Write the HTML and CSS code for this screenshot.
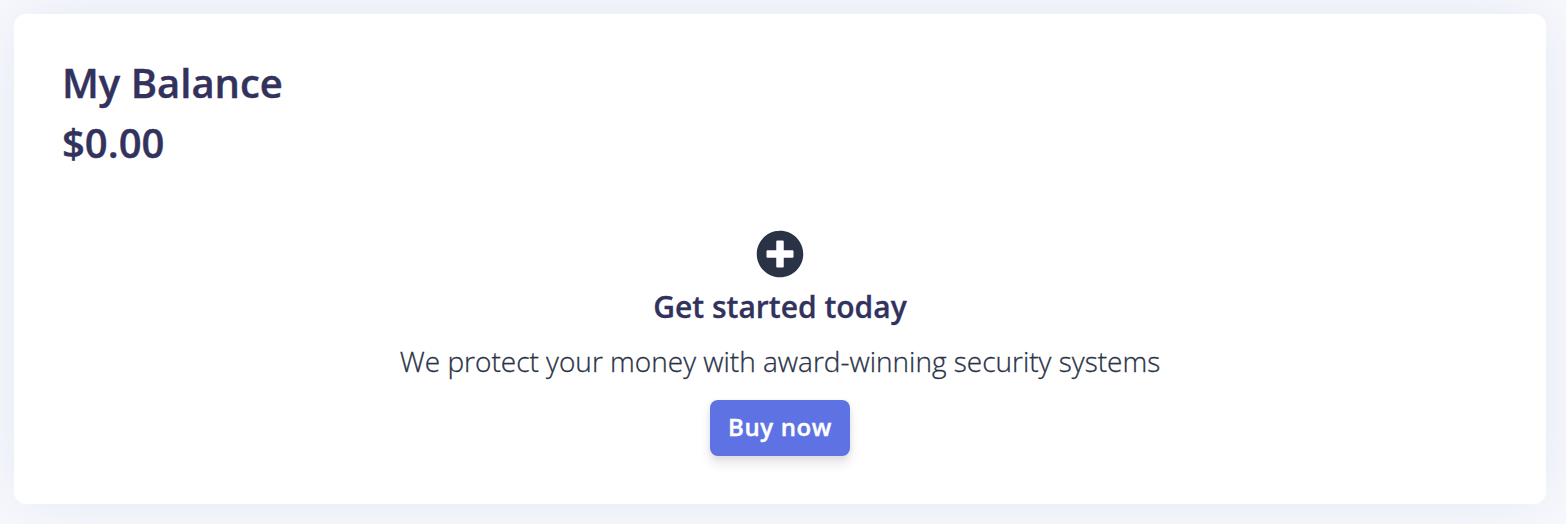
FILE: index.html
```html
<!DOCTYPE html>
<html lang="en">
<head>
<meta charset="utf-8">
<title>My Balance</title>
<link rel="stylesheet" href="styles.css">
</head>
<body>
<section class="card">
  <header class="balance">
    <h2 class="balance-title">My Balance</h2>
    <p class="balance-amount">$0.00</p>
  </header>
  <div class="starter">
    <svg class="plus-icon" viewBox="0 0 512 512" aria-hidden="true"><path fill="currentColor" d="M256 8C119 8 8 119 8 256s111 248 248 248 248-111 248-248S393 8 256 8zm144 276c0 6.600-5.400 12-12 12h-92v92c0 6.600-5.400 12-12 12h-56c-6.600 0-12-5.400-12-12v-92h-92c-6.600 0-12-5.400-12-12v-56c0-6.600 5.400-12 12-12h92v-92c0-6.600 5.400-12 12-12h56c6.600 0 12 5.400 12 12v92h92c6.600 0 12 5.400 12 12v56z"/></svg>
    <h3 class="starter-title">Get started today</h3>
    <p class="starter-text">We protect your money with award-winning security systems</p>
    <button class="buy-button" type="button">Buy now</button>
  </div>
</section>
</body>
</html>
```
FILE: styles.css
```css
* { box-sizing: border-box; }
body {
  margin: 0;
  height: 524px;
  padding: 14px 20px 20px 14px;
  overflow: hidden;
  background: #f8f9fe;
  font-family: "Open Sans", sans-serif;
  color: #2a3246;
}
.card {
  height: 490px;
  padding: 48px;
  border-radius: 12px;
  background: #fff;
  box-shadow: 0 0 64px rgba(136, 152, 185, 0.17);
}
.balance { color: #32325d; }
.balance-title, .balance-amount {
  margin: 0;
  font-size: 40px;
  line-height: 60px;
  font-weight: 600;
  -webkit-text-stroke: 0.4px currentColor;
}
.balance-title { margin-top: -9px; }
.starter {
  display: flex;
  flex-direction: column;
  align-items: center;
  padding-top: 57px;
}
.plus-icon { width: 48px; height: 48px; }
.starter-title {
  margin: 6px 0 0;
  font-size: 30px;
  line-height: 45px;
  font-weight: 600;
  color: #32325d;
  -webkit-text-stroke: 0.3px currentColor;
}
.starter-text {
  margin: 8px 0 0;
  font-size: 28px;
  line-height: 48px;
  font-weight: 300;
  white-space: nowrap;
  -webkit-text-stroke: 0.3px currentColor;
}
.buy-button {
  width: 140px;
  height: 56px;
  margin: 15px 0 0;
  padding: 0 0 2px;
  border: 0;
  border-radius: 8px;
  background: #5e72e4;
  color: #fff;
  font: 600 24px/36px "Open Sans", sans-serif;
  letter-spacing: 0.6px;
  -webkit-text-stroke: 0.4px currentColor;
  box-shadow: 0 8px 12px rgba(50, 50, 93, 0.11), 0 2px 6px rgba(0, 0, 0, 0.08);
}
```
